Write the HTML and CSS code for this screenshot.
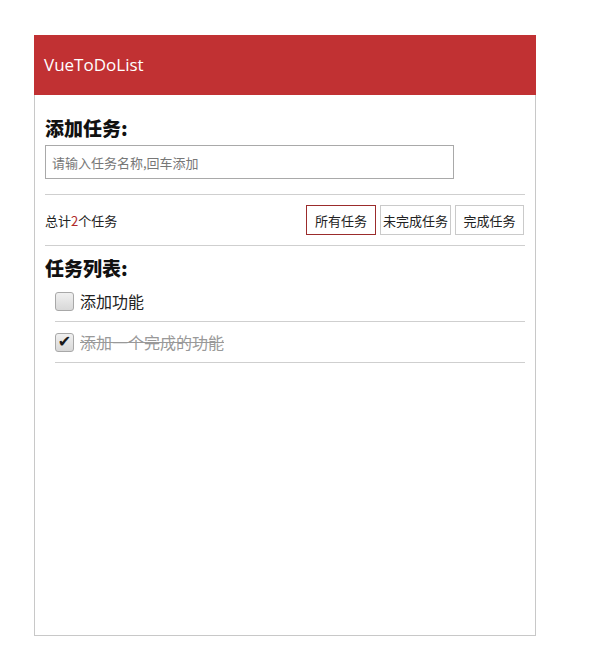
FILE: index.html
```html
<!DOCTYPE html>
<html lang="zh">
<head>
<meta charset="utf-8">
<title>VueToDoList</title>
<link rel="stylesheet" href="styles.css">
</head>
<body>
<div class="page">
  <div class="app">
    <header class="app-header">VueToDoList</header>
    <div class="app-body">
      <h2 class="section-title">添加任务:</h2>
      <input class="task-input" type="text" placeholder="请输入任务名称,回车添加">
      <div class="toolbar">
        <div class="total">总计<span class="count">2</span>个任务</div>
        <div class="filters">
          <button class="filter active f1">所有任务</button>
          <button class="filter f2">未完成任务</button>
          <button class="filter f3">完成任务</button>
        </div>
      </div>
      <h2 class="section-title list-title">任务列表:</h2>
      <ul class="tasks">
        <li class="task"><span class="check"></span><span class="task-name">添加功能</span></li>
        <li class="task done"><span class="check checked">&#10004;</span><span class="task-name">添加一个完成的功能</span></li>
      </ul>
    </div>
  </div>
</div>
</body>
</html>
```
FILE: styles.css
```css
* { box-sizing: border-box; }
html, body { margin: 0; padding: 0; background: #fff; }
body {
  font-family: "Noto Sans CJK SC", "Noto Sans", sans-serif;
  color: #222;
}
.page { padding: 35px 0 0 34px; }
.app {
  width: 502px;
  height: 601px;
  border: 1px solid #c8c8c8;
  border-top: none;
}
.app-header {
  height: 60px;
  margin: 0 -1px;
  background: #c13133;
  color: #fff;
  font-family: "Open Sans", "Noto Sans", sans-serif;
  font-size: 17px;
  line-height: 60px;
  padding-left: 10px;
}
.app-body { padding: 0 10px 0 10px; }
.section-title {
  margin: 0;
  font-size: 19px;
  font-weight: 900;
  color: #111;
  line-height: 26px;
}
.app-body > .section-title:first-child { padding-top: 20px; }
.task-input {
  display: block;
  margin-top: 4px;
  width: 409px;
  height: 34px;
  border: 1px solid #a9a9a9;
  padding: 0 6px;
  font-family: "Noto Sans CJK SC", sans-serif;
  font-size: 13px;
  color: #333;
  outline: none;
}
.task-input::placeholder { color: #777; }
.toolbar {
  margin-top: 15px;
  border-top: 1px solid #cfcfcf;
  border-bottom: 1px solid #cfcfcf;
  height: 52px;
  display: flex;
  align-items: center;
  justify-content: space-between;
  padding-right: 1px;
}
.total { font-size: 13px; color: #222; padding-top: 1px; }
.count { color: #b02a2a; }
.filters { display: flex; gap: 4px; }
.filter {
  height: 30px;
  border: 1px solid #cacaca;
  background: #fff;
  font-family: "Noto Sans CJK SC", sans-serif;
  font-size: 13px;
  color: #222;
  padding: 0;
  cursor: pointer;
}
.f1 { width: 70px; }
.f2 { width: 71px; }
.f3 { width: 69px; }
.filter.active { border-color: #9b2c2c; }
.list-title { margin-top: 9px; }
.tasks { list-style: none; margin: 0 0 0 10px; padding: 0; }
.task {
  height: 41px;
  border-bottom: 1px solid #cfcfcf;
  display: flex;
  align-items: center;
  font-size: 16px;
  color: #222;
}
.check {
  width: 19px;
  height: 19px;
  border: 1px solid #a8a8a8;
  border-radius: 3px;
  background: linear-gradient(#f0f0f0, #d8d8d8);
  margin-right: 6px;
  display: inline-flex;
  align-items: center;
  justify-content: center;
  font-size: 16px;
  color: #1a1a1a;
  line-height: 1;
  font-family: "DejaVu Sans", sans-serif;
}
.task.done .task-name { color: #999; text-decoration: line-through; }
```
